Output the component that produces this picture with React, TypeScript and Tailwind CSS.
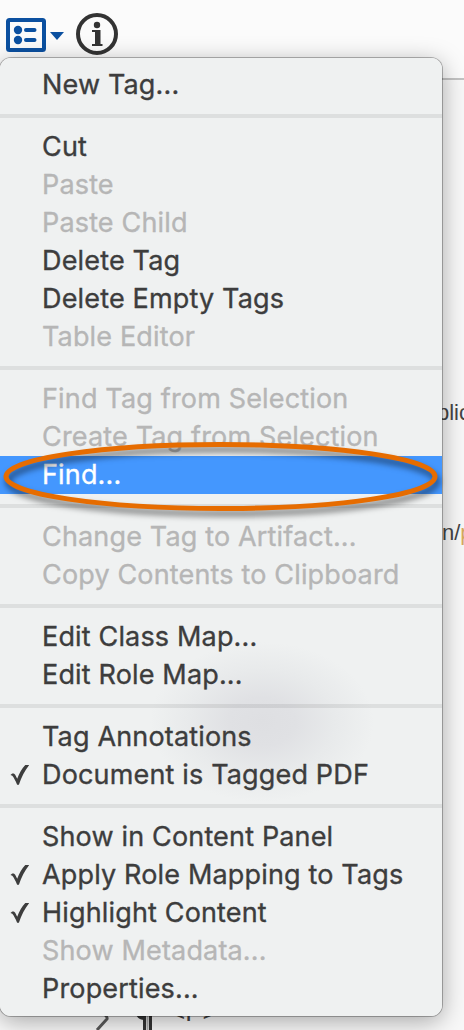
interface MenuItem {
  label: string;
  disabled?: boolean;
  checked?: boolean;
  active?: boolean;
}

const GROUPS: MenuItem[][] = [
  [{ label: "New Tag..." }],
  [
    { label: "Cut" },
    { label: "Paste", disabled: true },
    { label: "Paste Child", disabled: true },
    { label: "Delete Tag" },
    { label: "Delete Empty Tags" },
    { label: "Table Editor", disabled: true },
  ],
  [
    { label: "Find Tag from Selection", disabled: true },
    { label: "Create Tag from Selection", disabled: true },
    { label: "Find...", active: true },
  ],
  [
    { label: "Change Tag to Artifact...", disabled: true },
    { label: "Copy Contents to Clipboard", disabled: true },
  ],
  [{ label: "Edit Class Map..." }, { label: "Edit Role Map..." }],
  [{ label: "Tag Annotations" }, { label: "Document is Tagged PDF", checked: true }],
  [
    { label: "Show in Content Panel" },
    { label: "Apply Role Mapping to Tags", checked: true },
    { label: "Highlight Content", checked: true },
    { label: "Show Metadata...", disabled: true },
    { label: "Properties..." },
  ],
];

function itemColor(item: MenuItem) {
  if (item.active) return "bg-[#4497fe] text-white";
  return item.disabled ? "text-[#b6b6b6]" : "text-[#3d3d3d]";
}

function OptionsIcon() {
  return (
    <svg width="40" height="34" viewBox="0 0 40 34" fill="none">
      <rect x="2" y="2" width="36" height="30" rx="1.5" stroke="#0b50a0" strokeWidth="4" />
      <circle cx="12" cy="12" r="4.2" fill="#0b50a0" />
      <circle cx="12" cy="22" r="4.2" fill="#0b50a0" />
      <path d="M20 12h8.500M20 22h8.500" stroke="#0b50a0" strokeWidth="4" strokeLinecap="round" />
    </svg>
  );
}

function InfoIcon() {
  return (
    <svg width="42" height="42" viewBox="0 0 42 42">
      <circle cx="21" cy="21" r="19" fill="none" stroke="#333" strokeWidth="4" />
      <circle cx="21" cy="12" r="3.200" fill="#333" />
      <path d="M16 17h8.500v14h2v2H16v-2h3V19h-3z" fill="#333" />
    </svg>
  );
}

function CheckMark() {
  return (
    <svg width="20" height="22" viewBox="0 0 20 22">
      <path
        d="M.5 11C1.700 9 4 8.800 5.200 10.800L7.200 14.800C9.300 9.300 12 4 15.300 1h3.900C14.700 6.500 11.200 13.500 8.900 20.800H7.100C5.500 16.700 3.800 13.600 2.300 11.800z"
        fill="#3d3d3d"
      />
    </svg>
  );
}

function Menu() {
  return (
    <div className="relative h-[958px] w-[442px] overflow-hidden rounded-[11px] bg-[#eff1f1] py-2">
      <div className="absolute left-[150px] top-[584px] h-40 w-[224px] bg-[radial-gradient(closest-side,#dedfe2_0%,#e0e1e4_30%,#e8eaeb_65%,#eff1f1_100%)]" />
      {GROUPS.map((group, i) => (
        <div key={i} className="relative">
          {i > 0 && <div className="my-2.5 h-1 bg-black/[0.075]" />}
          {group.map((item) => (
            <div key={item.label} className={`flex h-[38px] items-center ${itemColor(item)}`}>
              <div className="w-[42px] flex-none pl-[10px]">{item.checked && <CheckMark />}</div>
              <span className="whitespace-nowrap text-[27px] leading-[38px] tracking-[0.16px] [-webkit-text-stroke:0.35px_currentColor]">
                {item.label}
              </span>
            </div>
          ))}
        </div>
      ))}
    </div>
  );
}

export default function App() {
  return (
    <main className="relative flex h-[1030px] w-[464px] flex-col overflow-hidden bg-[#f8f8f8] font-[Inter,sans-serif]">
      <header className="flex h-20 flex-none items-start border-b-2 border-[#c3c3c3] bg-[#fbfbfb] pl-1.5 pt-[13px]">
        <div className="pt-[5px]">
          <OptionsIcon />
        </div>
        <div className="pl-1 pr-3 pt-[19px]">
          <svg width="14" height="9" viewBox="0 0 14 9">
            <path d="M0 0h14L7 8z" fill="#0b50a0" />
          </svg>
        </div>
        <InfoIcon />
      </header>

      {/* Tags tree and page text around the menu */}
      <section className="flex flex-1 flex-col justify-between overflow-hidden pt-[319px] font-['Liberation_Sans',sans-serif] text-[22px] leading-7 text-[#444]">
        <div className="flex w-full flex-col gap-[92px]">
          <span className="pl-[437px]">plic</span>
          <span className="pl-[442px]">
            n/<span className="text-[#d9a860]">p</span>
          </span>
        </div>
        <div className="flex h-8 items-start pl-[90px]">
          <svg className="flex-none" width="80" height="32" viewBox="0 0 80 32" fill="none">
            <path d="M12 14q6 5 5 7L7 32" stroke="#5a5a5a" strokeWidth="3" />
            <path d="M54.500 16v16M60.500 16v16" stroke="#333" strokeWidth="3" />
            <path d="M57.500 16v16" stroke="#aaa" strokeWidth="2" />
            <path d="M55 22c-5 0-8-2-9-6h9z" fill="#333" />
          </svg>
          <span className="text-[26px] leading-7">{"<P>"}</span>
        </div>
      </section>

      <div className="absolute left-0 top-[58px] rounded-[11px] shadow-[0_0_0_1px_rgba(0,0,0,0.27),0_5px_24px_rgba(0,0,0,0.34)]">
        <Menu />
      </div>

      {/* Callout around the selected entry */}
      <svg
        className="absolute left-0 top-[430px] drop-shadow-[2px_5px_3px_rgba(0,0,0,0.55)]"
        width="450"
        height="100"
        viewBox="0 0 450 100"
      >
        <ellipse cx="220.500" cy="46.500" rx="214.500" ry="32" fill="none" stroke="#e66c00" strokeWidth="5" />
      </svg>
    </main>
  );
}
